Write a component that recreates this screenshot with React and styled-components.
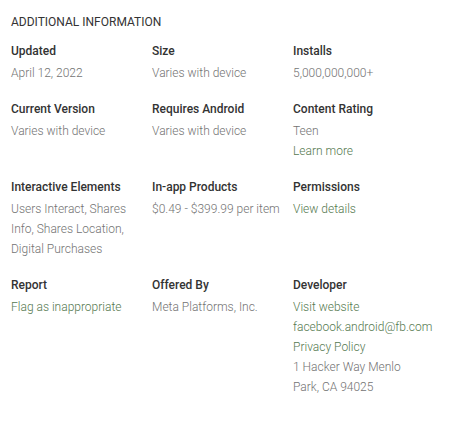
import React from 'react';
import styled, { createGlobalStyle } from 'styled-components';

const GlobalStyle = createGlobalStyle`
  body {
    margin: 0;
    background: #ffffff;
    font-family: Roboto, "Liberation Sans", Arial, sans-serif;
  }
`;

const Wrapper = styled.div`
  width: 475px;
  height: 422px;
  padding: 12px 11px 0;
  box-sizing: border-box;
  background: #fff;
`;

const Title = styled.h2`
  margin: 0 0 8px;
  font-size: 12px;
  line-height: 20px;
  font-weight: 400;
  color: #333;
  text-transform: uppercase;
`;

const Grid = styled.div`
  display: grid;
  grid-template-columns: 141px 141px 141px;
`;

const Block = styled.div`
  margin-bottom: 15px;
  padding-right: 12px;
`;

const Label = styled.div`
  font-size: 12px;
  line-height: 22px;
  font-weight: 500;
  color: #333;
`;

const Values = styled.div`
  padding-top: 1px;
`;

const Value = styled.div`
  font-size: 12px;
  line-height: 20px;
  font-weight: 300;
  color: ${(p) => (p.$link ? '#55794f' : '#737373')};
`;

const info = [
  { label: 'Updated', values: [{ text: 'April 12, 2022' }] },
  { label: 'Size', values: [{ text: 'Varies with device' }] },
  { label: 'Installs', values: [{ text: '5,000,000,000+' }] },
  { label: 'Current Version', values: [{ text: 'Varies with device' }] },
  { label: 'Requires Android', values: [{ text: 'Varies with device' }] },
  { label: 'Content Rating', values: [{ text: 'Teen' }, { text: 'Learn more', link: true }] },
  {
    label: 'Interactive Elements',
    values: [{ text: 'Users Interact, Shares Info, Shares Location, Digital Purchases' }],
  },
  { label: 'In-app Products', values: [{ text: '$0.49 - $399.99 per item' }] },
  { label: 'Permissions', values: [{ text: 'View details', link: true }] },
  { label: 'Report', values: [{ text: 'Flag as inappropriate', link: true }] },
  { label: 'Offered By', values: [{ text: 'Meta Platforms, Inc.' }] },
  {
    label: 'Developer',
    values: [
      { text: 'Visit website', link: true },
      { text: 'facebook.android@fb.com', link: true },
      { text: 'Privacy Policy', link: true },
      { text: '1 Hacker Way Menlo Park, CA 94025' },
    ],
  },
];

const App = () => (
  <Wrapper>
    <GlobalStyle />
    <Title>Additional Information</Title>
    <Grid>
      {info.map((item) => (
        <Block key={item.label}>
          <Label>{item.label}</Label>
          <Values>
            {item.values.map((v) => (
              <Value key={v.text} $link={v.link}>
                {v.text}
              </Value>
            ))}
          </Values>
        </Block>
      ))}
    </Grid>
  </Wrapper>
);

export default App;
